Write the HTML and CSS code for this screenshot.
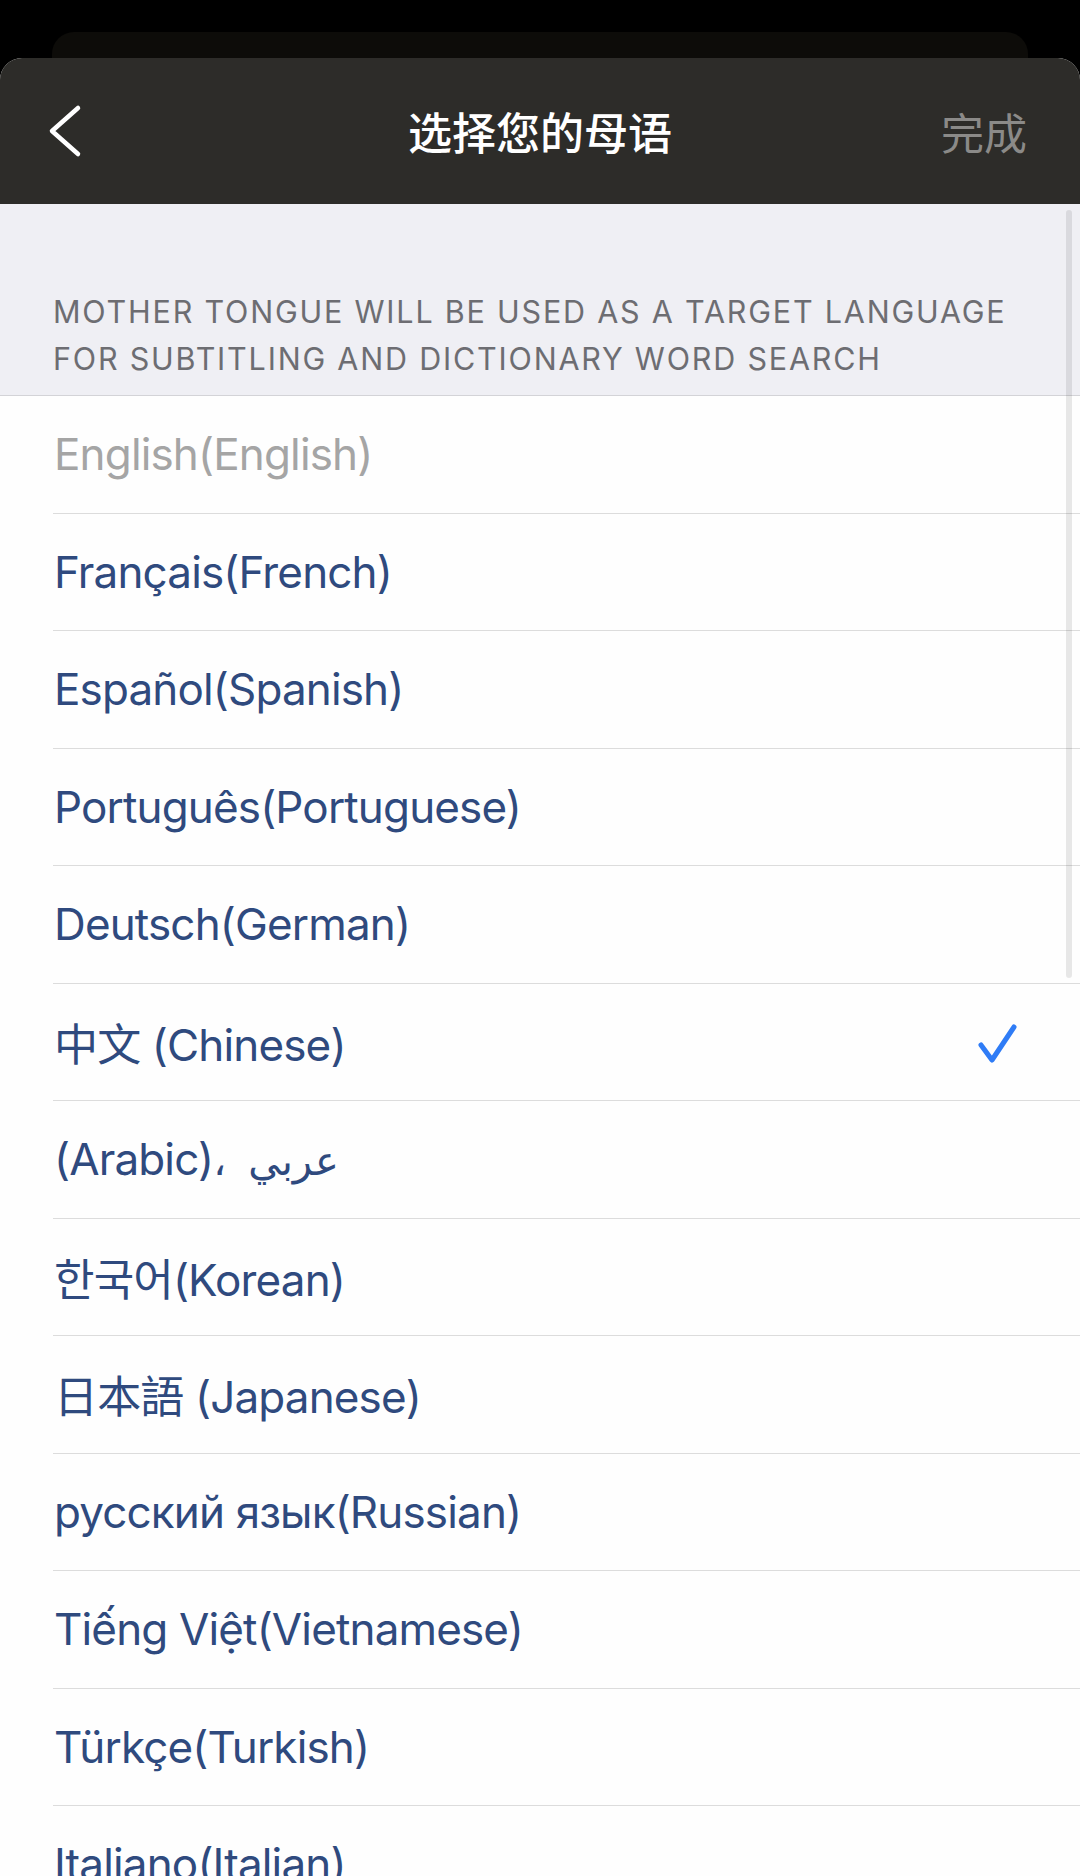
FILE: index.html
```html
<!DOCTYPE html>
<html lang="zh">
<head>
<meta charset="utf-8">
<title>选择您的母语</title>
<link rel="stylesheet" href="styles.css">
</head>
<body>
<div class="screen">
  <div class="back-card"></div>
  <div class="sheet">
    <header class="navbar">
      <div class="nav-left">
        <svg class="chevron" width="36" height="56" viewBox="0 0 36 56" aria-hidden="true">
          <polyline points="30,5 4,28 30,51" fill="none" stroke="#ffffff" stroke-width="4.5" stroke-linecap="round" stroke-linejoin="round"/>
        </svg>
      </div>
      <h1 class="title">选择您的母语</h1>
      <div class="nav-right"><span class="done">完成</span></div>
    </header>
    <section class="intro">
      <p class="intro-text">MOTHER TONGUE WILL BE USED AS A TARGET LANGUAGE FOR SUBTITLING AND DICTIONARY WORD SEARCH</p>
    </section>
    <ul class="list">
      <li class="row disabled"><span class="label">English(English)</span></li>
      <li class="row"><span class="label">Français(French)</span></li>
      <li class="row"><span class="label">Español(Spanish)</span></li>
      <li class="row"><span class="label">Português(Portuguese)</span></li>
      <li class="row"><span class="label">Deutsch(German)</span></li>
      <li class="row selected"><span class="label">中文 (Chinese)</span>
        <svg class="check" width="42" height="44" viewBox="0 0 42 44" aria-hidden="true">
          <polyline points="4,23 15,38 37,5" fill="none" stroke="#2f7cf6" stroke-width="5" stroke-linecap="round" stroke-linejoin="round"/>
        </svg>
      </li>
      <li class="row"><span class="label">(Arabic)<span class="arabic">، عربي</span></span></li>
      <li class="row"><span class="label">한국어(Korean)</span></li>
      <li class="row"><span class="label">日本語 (Japanese)</span></li>
      <li class="row"><span class="label">русский язык(Russian)</span></li>
      <li class="row"><span class="label">Tiếng Việt(Vietnamese)</span></li>
      <li class="row"><span class="label">Türkçe(Turkish)</span></li>
      <li class="row"><span class="label">Italiano(Italian)</span></li>
    </ul>
    <div class="scrollbar"></div>
  </div>
</div>
</body>
</html>
```

FILE: styles.css
```css
* {
  box-sizing: border-box;
}

html, body {
  margin: 0;
  padding: 0;
  background: #000;
}

body {
  font-family: "Inter", "Noto Sans CJK SC", "DejaVu Sans", sans-serif;
}

.screen {
  width: 1080px;
  height: 1876px;
  overflow: hidden;
  background: #000;
  padding-top: 32px;
}

.back-card {
  margin: 0 52px;
  height: 26px;
  background: #0d0c09;
  border-radius: 22px 22px 0 0;
}

.sheet {
  position: relative;
  background: #fefefe;
  border-radius: 22px 22px 0 0;
  overflow: hidden;
  height: 1818px;
}

.navbar {
  height: 146px;
  background: #2d2c29;
  display: grid;
  grid-template-columns: 1fr auto 1fr;
  align-items: center;
}

.nav-left {
  padding-left: 48px;
  display: flex;
  align-items: center;
}

.chevron {
  display: block;
}

.title {
  margin: 0;
  font-family: "Noto Sans CJK SC", sans-serif;
  font-size: 44px;
  font-weight: 500;
  color: #ffffff;
  line-height: 1;
  letter-spacing: 0;
}

.nav-right {
  display: flex;
  justify-content: flex-end;
  padding-right: 53px;
}

.done {
  font-family: "Noto Sans CJK SC", sans-serif;
  font-size: 43px;
  font-weight: 400;
  color: #8b8a88;
  line-height: 1;
}

.intro {
  height: 192px;
  background: #efeff4;
  border-bottom: 1px solid #d3d3d7;
  display: flex;
  align-items: flex-end;
  padding: 0 62px 13px 53px;
}

.intro-text {
  margin: 0;
  font-size: 30.5px;
  line-height: 47px;
  color: #6d6d72;
  letter-spacing: 1.8px;
}

.list {
  list-style: none;
  margin: 0;
  padding: 0;
}

.row {
  margin-left: 53px;
  height: 117.5px;
  border-bottom: 1px solid #dcdcdc;
  display: flex;
  align-items: center;
  justify-content: space-between;
  padding-right: 61px;
}

.label {
  font-size: 44px;
  color: #2f4a7e;
  padding-left: 1px;
  white-space: nowrap;
  letter-spacing: -0.85px;
}

.arabic {
  letter-spacing: 0;
  word-spacing: 11px;
  font-size: 40px;
}

.row.disabled .label {
  color: #a5a5a5;
}

.check {
  display: block;
  margin-top: 4px;
}

.scrollbar {
  position: absolute;
  top: 152px;
  right: 8px;
  width: 6px;
  height: 768px;
  border-radius: 3px;
  background: rgba(0, 0, 0, 0.09);
}
```
